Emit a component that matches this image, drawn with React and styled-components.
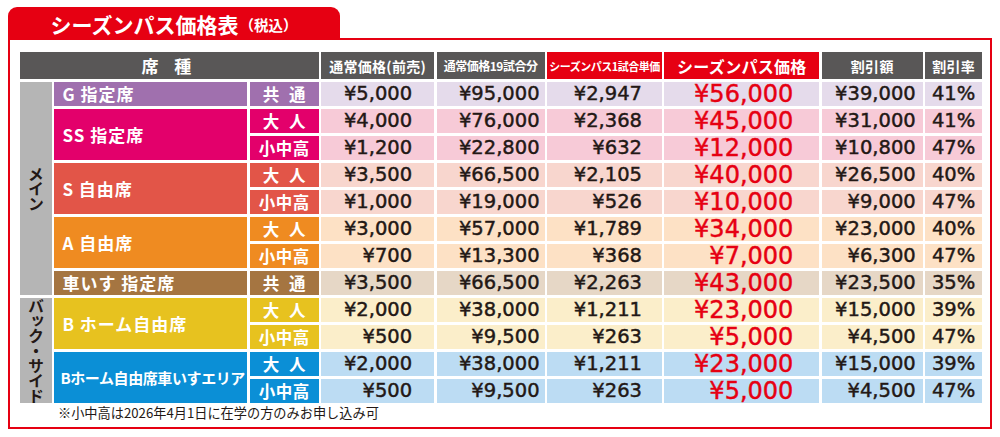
import styled, { createGlobalStyle } from 'styled-components'

const GlobalStyle = createGlobalStyle`
  body {
    margin: 0;
    background: #ffffff;
    font-family: 'Noto Sans CJK JP', 'Noto Sans', sans-serif;
  }
`

const RED = '#e60012'
const INK = '#231815'

const groups = [
  {
    name: 'G 指定席', bg: '#a070ae', light: '#e5dbeb',
    rows: [['共 通', ['¥5,000', '¥95,000', '¥2,947', '¥56,000', '¥39,000', '41%']]],
  },
  {
    name: 'SS 指定席', bg: '#e3006b', light: '#f7cad7',
    rows: [
      ['大 人', ['¥4,000', '¥76,000', '¥2,368', '¥45,000', '¥31,000', '41%']],
      ['小中高', ['¥1,200', '¥22,800', '¥632', '¥12,000', '¥10,800', '47%']],
    ],
  },
  {
    name: 'S 自由席', bg: '#e25548', light: '#f8d6ce',
    rows: [
      ['大 人', ['¥3,500', '¥66,500', '¥2,105', '¥40,000', '¥26,500', '40%']],
      ['小中高', ['¥1,000', '¥19,000', '¥526', '¥10,000', '¥9,000', '47%']],
    ],
  },
  {
    name: 'A 自由席', bg: '#ef8b21', light: '#fde1c5',
    rows: [
      ['大 人', ['¥3,000', '¥57,000', '¥1,789', '¥34,000', '¥23,000', '40%']],
      ['小中高', ['¥700', '¥13,300', '¥368', '¥7,000', '¥6,300', '47%']],
    ],
  },
  {
    name: '車いす 指定席', bg: '#a57541', light: '#e6d7c6',
    rows: [['共 通', ['¥3,500', '¥66,500', '¥2,263', '¥43,000', '¥23,500', '35%']]],
  },
  {
    name: 'B ホーム自由席', bg: '#e7c21f', light: '#fbeeca',
    rows: [
      ['大 人', ['¥2,000', '¥38,000', '¥1,211', '¥23,000', '¥15,000', '39%']],
      ['小中高', ['¥500', '¥9,500', '¥263', '¥5,000', '¥4,500', '47%']],
    ],
  },
  {
    name: 'Bホーム自由席車いすエリア', bg: '#0b8fd6', light: '#bcdcf3', tight: true,
    rows: [
      ['大 人', ['¥2,000', '¥38,000', '¥1,211', '¥23,000', '¥15,000', '39%']],
      ['小中高', ['¥500', '¥9,500', '¥263', '¥5,000', '¥4,500', '47%']],
    ],
  },
]

const sections = [
  { label: 'メイン', from: 0, to: 5 },
  { label: 'バック・サイド', from: 5, to: 7 },
]

// right padding of each value column, the last one is centered
const valuePads = [22, 5, 20, 26, 7, null]

const heads = [
  { text: '通常価格(前売)', red: false, size: 14 },
  { text: '通常価格19試合分', red: false, size: 12, tight: true },
  { text: 'シーズンパス1試合単価', red: true, size: 11, tight: true },
  { text: 'シーズンパス価格', red: true, size: 16 },
  { text: '割引額', red: false, size: 14 },
  { text: '割引率', red: false, size: 14 },
]

export default function App() {
  let rowIndex = 2
  const groupRows = groups.map((g) => {
    const start = rowIndex
    rowIndex += g.rows.length
    return start
  })

  return (
    <>
      <GlobalStyle />
      <Page>
        <Tab>
          シーズンパス価格表<TabSmall>（税込）</TabSmall>
        </Tab>
        <Frame>
          <Table>
            <HeadCell $col={1} $colSpan={3} $size={17} $spaced>
              席 種
            </HeadCell>
            {heads.map((h, i) => (
              <HeadCell
                key={h.text}
                $col={4 + i}
                $red={h.red}
                $size={h.size}
                $tight={h.tight}
              >
                {h.text}
              </HeadCell>
            ))}

            {sections.map((s) => {
              const start = groupRows[s.from]
              const end = s.to < groups.length ? groupRows[s.to] : rowIndex
              return (
                <SectionLabel key={s.label} $row={start} $span={end - start}>
                  {s.label}
                </SectionLabel>
              )
            })}

            {groups.map((g, gi) => (
              <SeatName
                key={g.name}
                $row={groupRows[gi]}
                $span={g.rows.length}
                $bg={g.bg}
                $tight={g.tight}
              >
                {g.name}
              </SeatName>
            ))}

            {groups.map((g, gi) =>
              g.rows.map(([type, values], ri) => {
                const row = groupRows[gi] + ri
                return [
                  <TypeCell key={`t${row}`} $row={row} $bg={g.bg}>
                    {type}
                  </TypeCell>,
                  ...values.map((v, vi) => (
                    <Value
                      key={`v${row}-${vi}`}
                      $row={row}
                      $col={4 + vi}
                      $bg={g.light}
                      $pad={valuePads[vi]}
                      $big={vi === 3}
                    >
                      {v}
                    </Value>
                  )),
                ]
              })
            )}
          </Table>
          <Note>※小中高は2026年4月1日に在学の方のみお申し込み可</Note>
        </Frame>
      </Page>
    </>
  )
}

const Page = styled.div`
  padding: 7px 0 0 8px;
  width: 984px;
`

const Tab = styled.div`
  width: 332px;
  height: 31px;
  background: ${RED};
  border-radius: 9px 9px 0 0;
  color: #ffffff;
  font-weight: 700;
  font-size: 21px;
  display: flex;
  align-items: center;
  justify-content: center;
  padding-top: 2px;
  box-sizing: border-box;
`

const TabSmall = styled.span`
  font-size: 14.5px;
  margin-left: 1px;
  margin-top: 2px;
`

const Frame = styled.div`
  box-sizing: border-box;
  width: 984px;
  height: 391px;
  border: 2px solid ${RED};
  padding: 12px 8px 0 10px;
`

const Table = styled.div`
  display: grid;
  grid-template-columns: 32px 193px 69px 113px 108px 115px 155px 101px 57px;
  grid-template-rows: 27px repeat(12, 24.5px);
  column-gap: 2.4px;
  row-gap: 2.5px;
`

const HeadCell = styled.div`
  grid-row: 1;
  grid-column: ${(p) => p.$col} / span ${(p) => p.$colSpan || 1};
  background: ${(p) => (p.$red ? RED : '#595757')};
  color: #ffffff;
  font-weight: 700;
  font-size: ${(p) => p.$size}px;
  letter-spacing: ${(p) => (p.$spaced ? '6px' : p.$tight ? '-0.5px' : '0.3px')};
  white-space: nowrap;
  display: flex;
  align-items: center;
  justify-content: center;
`

const SectionLabel = styled.div`
  grid-column: 1;
  grid-row: ${(p) => p.$row} / span ${(p) => p.$span};
  background: #b5b5b5;
  color: ${INK};
  font-weight: 700;
  font-size: 16px;
  writing-mode: vertical-rl;
  letter-spacing: -1px;
  display: flex;
  align-items: center;
  justify-content: center;
`

const SeatName = styled.div`
  grid-column: 2;
  grid-row: ${(p) => p.$row} / span ${(p) => p.$span};
  background: ${(p) => p.$bg};
  color: #ffffff;
  font-weight: 700;
  font-size: ${(p) => (p.$tight ? 15 : 17)}px;
  letter-spacing: ${(p) => (p.$tight ? '-0.4px' : '1px')};
  white-space: nowrap;
  padding-left: ${(p) => (p.$tight ? 6 : 8)}px;
  display: flex;
  align-items: center;
`

const TypeCell = styled.div`
  grid-column: 3;
  grid-row: ${(p) => p.$row};
  background: ${(p) => p.$bg};
  color: #ffffff;
  font-weight: 700;
  font-size: 16.5px;
  letter-spacing: 0.5px;
  word-spacing: 5px;
  display: flex;
  align-items: center;
  justify-content: center;
`

const Value = styled.div`
  grid-column: ${(p) => p.$col};
  grid-row: ${(p) => p.$row};
  background: ${(p) => p.$bg};
  color: ${(p) => (p.$big ? RED : INK)};
  font-family: 'DejaVu Sans', 'Liberation Sans', sans-serif;
  font-size: ${(p) => (p.$big ? 24 : 19.5)}px;
  -webkit-text-stroke: 0.45px currentColor;
  line-height: 1;
  white-space: nowrap;
  display: flex;
  align-items: center;
  justify-content: ${(p) => (p.$pad == null ? 'center' : 'flex-end')};
  padding-right: ${(p) => (p.$pad == null ? 0 : p.$pad)}px;
`

const Note = styled.div`
  margin-top: 2px;
  padding-left: 38px;
  font-size: 13.2px;
  line-height: 16px;
  color: ${INK};
`
